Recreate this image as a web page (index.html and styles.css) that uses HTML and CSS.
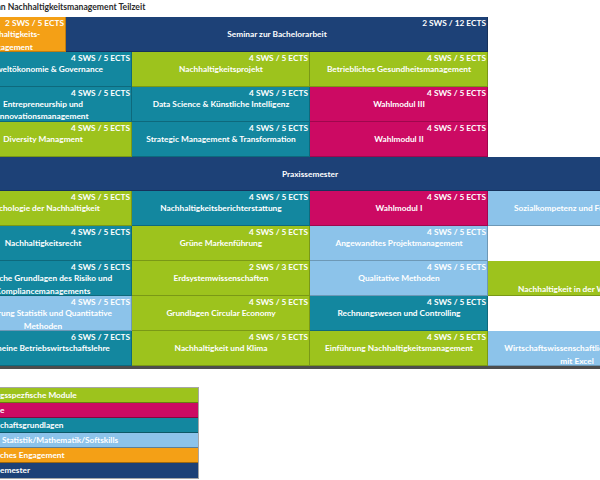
FILE: index.html
```html
<!DOCTYPE html>
<html lang="de">
<head>
<meta charset="utf-8">
<title>Studienverlaufsplan Nachhaltigkeitsmanagement Teilzeit</title>
<link rel="stylesheet" href="styles.css">
</head>
<body>
<div class="sheet">
  <h1 class="title">Studienverlaufsplan Nachhaltigkeitsmanagement Teilzeit</h1>
  <div class="plan">
    <div class="cell orange"><div class="sws">2 SWS / 5 ECTS</div><div class="name">Nachhaltigkeits-<br>engagement</div></div>
    <div class="cell navy span3"><div class="sws">2 SWS / 12 ECTS</div><div class="name">Seminar zur Bachelorarbeit</div></div>
    <div class="empty"></div>

    <div class="cell teal span2"><div class="sws">4 SWS / 5 ECTS</div><div class="name">Umweltökonomie &amp; Governance</div></div>
    <div class="cell lime"><div class="sws">4 SWS / 5 ECTS</div><div class="name">Nachhaltigkeitsprojekt</div></div>
    <div class="cell lime"><div class="sws">4 SWS / 5 ECTS</div><div class="name">Betriebliches Gesundheitsmanagement</div></div>
    <div class="empty"></div>

    <div class="cell teal span2"><div class="sws">4 SWS / 5 ECTS</div><div class="name">Entrepreneurship und<br>Innovationsmanagement</div></div>
    <div class="cell teal"><div class="sws">4 SWS / 5 ECTS</div><div class="name">Data Science &amp; Künstliche Intelligenz</div></div>
    <div class="cell magenta"><div class="sws">4 SWS / 5 ECTS</div><div class="name">Wahlmodul III</div></div>
    <div class="empty"></div>

    <div class="cell lime span2"><div class="sws">4 SWS / 5 ECTS</div><div class="name">Diversity Managment</div></div>
    <div class="cell teal"><div class="sws">4 SWS / 5 ECTS</div><div class="name">Strategic Management &amp; Transformation</div></div>
    <div class="cell magenta"><div class="sws">4 SWS / 5 ECTS</div><div class="name">Wahlmodul II</div></div>
    <div class="empty"></div>

    <div class="cell navy span5"><div class="sws">&nbsp;</div><div class="name">Praxissemester</div></div>

    <div class="cell lime span2"><div class="sws">4 SWS / 5 ECTS</div><div class="name">Psychologie der Nachhaltigkeit</div></div>
    <div class="cell teal"><div class="sws">4 SWS / 5 ECTS</div><div class="name">Nachhaltigkeitsberichterstattung</div></div>
    <div class="cell magenta"><div class="sws">4 SWS / 5 ECTS</div><div class="name">Wahlmodul I</div></div>
    <div class="cell sky"><div class="sws">&nbsp;</div><div class="name">Sozialkompetenz und Führungsstil</div></div>

    <div class="cell teal span2"><div class="sws">4 SWS / 5 ECTS</div><div class="name">Nachhaltigkeitsrecht</div></div>
    <div class="cell lime"><div class="sws">4 SWS / 5 ECTS</div><div class="name">Grüne Markenführung</div></div>
    <div class="cell sky"><div class="sws">4 SWS / 5 ECTS</div><div class="name">Angewandtes Projektmanagement</div></div>
    <div class="empty"></div>

    <div class="cell teal span2"><div class="sws">4 SWS / 5 ECTS</div><div class="name">Rechtliche Grundlagen des Risiko und<br>Compliancemanagements</div></div>
    <div class="cell lime"><div class="sws">2 SWS / 3 ECTS</div><div class="name">Erdsystemwissenschaften</div></div>
    <div class="cell sky"><div class="sws">4 SWS / 5 ECTS</div><div class="name">Qualitative Methoden</div></div>
    <div class="cell lime low"><div class="sws">&nbsp;</div><div class="name">Nachhaltigkeit in der Wirtschaft</div></div>

    <div class="cell sky span2"><div class="sws">4 SWS / 5 ECTS</div><div class="name">Einführung Statistik und Quantitative<br>Methoden</div></div>
    <div class="cell lime"><div class="sws">4 SWS / 5 ECTS</div><div class="name">Grundlagen Circular Economy</div></div>
    <div class="cell teal"><div class="sws">4 SWS / 5 ECTS</div><div class="name">Rechnungswesen und Controlling</div></div>
    <div class="empty"></div>

    <div class="cell teal span2"><div class="sws">6 SWS / 7 ECTS</div><div class="name">Allgemeine Betriebswirtschaftslehre</div></div>
    <div class="cell lime"><div class="sws">4 SWS / 5 ECTS</div><div class="name">Nachhaltigkeit und Klima</div></div>
    <div class="cell lime"><div class="sws">4 SWS / 5 ECTS</div><div class="name">Einführung Nachhaltigkeitsmanagement</div></div>
    <div class="cell sky"><div class="sws">&nbsp;</div><div class="name">Wirtschaftswissenschaftliches Arbeiten<br>mit Excel</div></div>
  </div>

  <ul class="legend">
    <li class="key lime">gsspezfische Module</li>
    <li class="key magenta">e</li>
    <li class="key teal">chaftsgrundlagen</li>
    <li class="key sky">&nbsp;Statistik/Mathematik/Softskills</li>
    <li class="key orange">ches Engagement</li>
    <li class="key navy">emester</li>
  </ul>
</div>
</body>
</html>
```

FILE: styles.css
```css
html, body {
  margin: 0;
  padding: 0;
  overflow: hidden;
  background: #ffffff;
}

body {
  font-family: Lato, "Open Sans", "DejaVu Sans", sans-serif;
  font-weight: 700;
  font-size: 8.3px;
  color: #ffffff;
  width: 600px;
  height: 480px;
}

.sheet {
  display: flex;
  flex-direction: column;
}

.title {
  margin: 0 0 0 -70px;
  height: 17px;
  line-height: 15px;
  font-size: 8.6px;
  font-weight: 700;
  color: #2b2b2b;
  white-space: nowrap;
}

.plan {
  display: grid;
  grid-template-columns: 112px 66px 178px 178px 178px;
  grid-auto-rows: 34.9px;
  width: 712px;
  margin-left: -46px;
  border-bottom: 3px solid #4d4d4d;
}

.cell {
  box-sizing: border-box;
  padding: 1px 1px 0 2px;
  border-right: 1px solid rgba(0, 0, 0, 0.22);
  border-bottom: 1px solid rgba(0, 0, 0, 0.22);
  overflow: hidden;
  white-space: nowrap;
}

.span2 { grid-column: span 2; }
.span3 { grid-column: span 3; }
.span5 { grid-column: span 5; }

.sws {
  text-align: right;
  line-height: 10px;
}

.name {
  text-align: center;
  line-height: 12.5px;
}

.low .name {
  padding-top: 11px;
}

.orange  { background: #f4a016; }
.navy    { background: #1d4177; }
.teal    { background: #13879f; }
.lime    { background: #9dc31d; }
.magenta { background: #cc0a63; }
.sky     { background: #8cc3ea; }

.legend {
  list-style: none;
  margin: 18px 0 0 0;
  padding: 0;
  width: 198px;
  border: 1px solid rgba(0, 0, 0, 0.35);
  border-left: 0;
}

.key {
  box-sizing: border-box;
  height: 15px;
  line-height: 14px;
  border-bottom: 1px solid rgba(0, 0, 0, 0.35);
  white-space: nowrap;
}

.key:last-child {
  border-bottom: 0;
}
```
